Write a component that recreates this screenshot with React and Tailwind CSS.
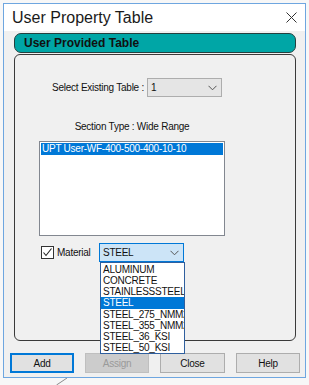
import React from "react";

const Chevron = ({ className = "" }) => (
  <svg width="9" height="6" viewBox="0 0 9 6" className={className}>
    <polyline points="0.5,0.8 4.5,4.8 8.5,0.8" fill="none" stroke="#555" strokeWidth="1" />
  </svg>
);

export default function App() {
  const items = [
    "ALUMINUM",
    "CONCRETE",
    "STAINLESSSTEEL",
    "STEEL",
    "STEEL_275_NMM2",
    "STEEL_355_NMM2",
    "STEEL_36_KSI",
    "STEEL_50_KSI",
  ];
  return (
    <div
      className="relative w-[309px] h-[385px] bg-[#f7f7f7] pt-[3px] pl-[3px] overflow-hidden text-[10px] tracking-[-0.25px] text-[#111]"
      style={{ fontFamily: '"Liberation Sans", Arial, sans-serif' }}
    >
      <div className="w-[303px] h-[375px] border border-[#6ea6e0] flex flex-col bg-[#f0f0f0]">
        {/* title bar */}
        <div className="h-[27px] shrink-0 bg-white flex items-center justify-between pl-[8px] pr-[8px]">
          <span className="text-[16px] tracking-normal text-[#1a1a1a] leading-none">User Property Table</span>
          <svg width="11" height="11" viewBox="0 0 11 11">
            <line x1="0.5" y1="0.5" x2="10.5" y2="10.5" stroke="#333" strokeWidth="1" />
            <line x1="10.5" y1="0.5" x2="0.5" y2="10.5" stroke="#333" strokeWidth="1" />
          </svg>
        </div>
        {/* body */}
        <div className="flex-1 flex flex-col pl-[6px] pt-[2px]">
          <div className="ml-[4px] w-[282px] h-[20px] rounded-[7px] bg-[#00a6a6] border border-[#24403f] flex items-center pl-[9px]">
            <span className="text-[12px] font-bold tracking-normal text-[#111] leading-none">User Provided Table</span>
          </div>
          <div className="relative mt-[1px] ml-[4px] w-[282px] h-[287px] rounded-[6px] border border-[#3a3a3a] flex flex-col">
            {/* select existing */}
            <div className="mt-[23px] ml-[36px] flex items-center h-[19px]">
              <div className="w-[93px] text-right whitespace-nowrap">Select Existing Table :</div>
              <div className="ml-[3px] w-[75px] h-[19px] bg-[#e5e5e5] border border-[#adadad] flex items-center justify-between pl-[3px] pr-[4px]">
                <span>1</span>
                <Chevron />
              </div>
            </div>
            <div className="mt-[24px] ml-[24px] w-[186px] h-[12px] leading-[12px] text-center whitespace-nowrap">
              Section Type : Wide Range
            </div>
            <div className="mt-[8px] ml-[24px] w-[186px] h-[95px] border border-[#828790] bg-white p-[1px]">
              <div className="h-[12px] leading-[12px] bg-[#0078d7] text-white pl-[1px] whitespace-nowrap">
                UPT User-WF-400-500-400-10-10
              </div>
            </div>
            {/* material */}
            <div className="mt-[7px] ml-[26px] flex items-center h-[19px]">
              <div className="w-[58px] flex items-center">
                <div className="w-[13px] h-[13px] border border-[#333] bg-white flex items-center justify-center">
                  <svg width="11" height="11" viewBox="0 0 11 11">
                    <polyline points="1.5,5.5 4,8.5 9.5,1.5" fill="none" stroke="#222" strokeWidth="1.1" />
                  </svg>
                </div>
                <span className="ml-[3px]">Material</span>
              </div>
              <div className="relative w-[85px] h-[19px] bg-[#cce4f7] border border-[#0078d7] flex items-center justify-between pl-[3px] pr-[4px]">
                <span>STEEL</span>
                <Chevron />
                <div className="absolute left-[0px] top-[18px] w-[85px] h-[92px] bg-white border border-[#2f5f9e] overflow-hidden z-10 py-[0.5px]">
                  {items.map((it) => (
                    <div
                      key={it}
                      className={
                        "h-[11.25px] leading-[11.25px] pl-[2px] whitespace-nowrap " +
                        (it === "STEEL" ? "bg-[#0078d7] text-white" : "text-[#111]")
                      }
                    >
                      {it}
                    </div>
                  ))}
                </div>
              </div>
            </div>
          </div>
          {/* buttons */}
          <div className="mt-[12px] flex gap-[11px]">
            <div className="w-[64px] h-[20px] bg-[#e1e1e1] border-2 border-[#0078d7] flex items-center justify-center">Add</div>
            <div className="w-[64px] h-[20px] bg-[#cccccc] border border-[#bfbfbf] text-[#9a9a9a] flex items-center justify-center">Assign</div>
            <div className="w-[65px] h-[20px] bg-[#e1e1e1] border border-[#adadad] flex items-center justify-center">Close</div>
            <div className="w-[64px] h-[20px] bg-[#e1e1e1] border border-[#adadad] flex items-center justify-center">Help</div>
          </div>
        </div>
      </div>
      <svg className="absolute left-[56px] top-[378px]" width="12" height="7" viewBox="0 0 12 7">
        <line x1="0.5" y1="7" x2="11" y2="0" stroke="#8a8a8a" strokeWidth="1" />
      </svg>
    </div>
  );
}
